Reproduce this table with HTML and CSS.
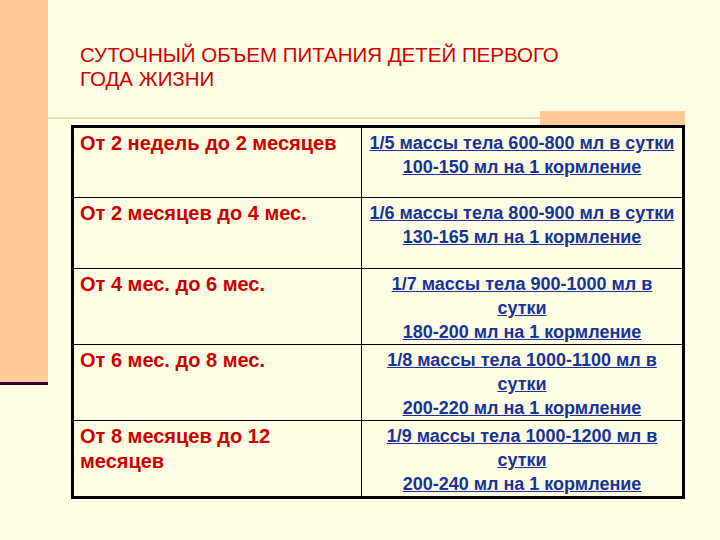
FILE: index.html
```html
<!DOCTYPE html>
<html lang="ru">
<head>
<meta charset="utf-8">
<link rel="stylesheet" href="styles.css">
</head>
<body>
<div class="page">
  <div class="side">
    <div class="strip"></div>
    <div class="stripline"></div>
  </div>
  <div class="main">
    <h1 class="title">СУТОЧНЫЙ ОБЪЕМ ПИТАНИЯ ДЕТЕЙ ПЕРВОГО<br>ГОДА ЖИЗНИ</h1>
    <div class="rule">
      <div class="rule-line"></div>
      <div class="rule-block"></div>
    </div>
    <table class="grid">
      <colgroup><col class="c-age"><col class="c-vol"></colgroup>
      <tr class="r1">
        <td class="age">От 2 недель до 2 месяцев</td>
        <td class="vol"><span class="lnk">1/5 массы тела 600-800 мл в сутки</span><br><span class="lnk">100-150 мл на 1 кормление</span></td>
      </tr>
      <tr class="r2">
        <td class="age">От 2 месяцев до 4 мес.</td>
        <td class="vol"><span class="lnk">1/6 массы тела 800-900 мл в сутки</span><br><span class="lnk">130-165 мл на 1 кормление</span></td>
      </tr>
      <tr class="r3">
        <td class="age">От 4 мес. до 6 мес.</td>
        <td class="vol"><span class="lnk">1/7 массы тела 900-1000 мл в</span><br><span class="lnk">сутки</span><br><span class="lnk">180-200 мл на 1 кормление</span></td>
      </tr>
      <tr class="r4">
        <td class="age">От 6 мес. до 8 мес.</td>
        <td class="vol"><span class="lnk">1/8 массы тела 1000-1100 мл в</span><br><span class="lnk">сутки</span><br><span class="lnk">200-220 мл на 1 кормление</span></td>
      </tr>
      <tr class="r5">
        <td class="age">От 8 месяцев до 12<br>месяцев</td>
        <td class="vol"><span class="lnk">1/9 массы тела 1000-1200 мл в</span><br><span class="lnk">сутки</span><br><span class="lnk">200-240 мл на 1 кормление</span></td>
      </tr>
    </table>
  </div>
</div>
</body>
</html>
```
FILE: styles.css
```css
html, body {
  margin: 0;
  padding: 0;
}
body {
  background: #FFFDE3;
  font-family: "Liberation Sans", Arial, sans-serif;
}
.page {
  width: 720px;
  height: 540px;
  display: grid;
  grid-template-columns: 48px 1fr;
  background: #FFFDE3;
  overflow: hidden;
}
.side {
  display: flex;
  flex-direction: column;
}
.strip {
  height: 382px;
  background: #FFCC99;
}
.stripline {
  height: 3px;
  background: #330033;
}
.main {
  padding-top: 43px;
}
.title {
  margin: 0 0 0 32px;
  font-size: 20.5px;
  line-height: 24px;
  font-weight: normal;
  color: #D00000;
  height: 67px;
  white-space: nowrap;
}
.rule {
  display: flex;
  align-items: center;
  height: 15px;
}
.rule-line {
  flex: 1;
  height: 2px;
  background: #EADCB2;
}
.rule-block {
  width: 145px;
  height: 14px;
  background: #FFCC99;
  margin-right: 35px;
}
.grid {
  margin-left: 23px;
  width: 614px;
  border-collapse: collapse;
  border: 3px solid #000;
  table-layout: fixed;
}
.c-age { width: 289px; }
.grid td {
  border: 1px solid #000;
  vertical-align: top;
  font-weight: bold;
  padding: 0;
  box-sizing: border-box;
}
.grid td.age {
  color: #CC0000;
  font-size: 20px;
  padding: 3px 0 0 6px;
  line-height: 25px;
}
.grid td.vol {
  text-align: center;
  color: #15339A;
  font-size: 18px;
  line-height: 24px;
  padding-top: 3px;
  white-space: nowrap;
}
.lnk {
  text-decoration: underline;
}
.r1 td, .r2 td { height: 71px; }
.r3 td, .r4 td, .r5 td { height: 76px; }
```
